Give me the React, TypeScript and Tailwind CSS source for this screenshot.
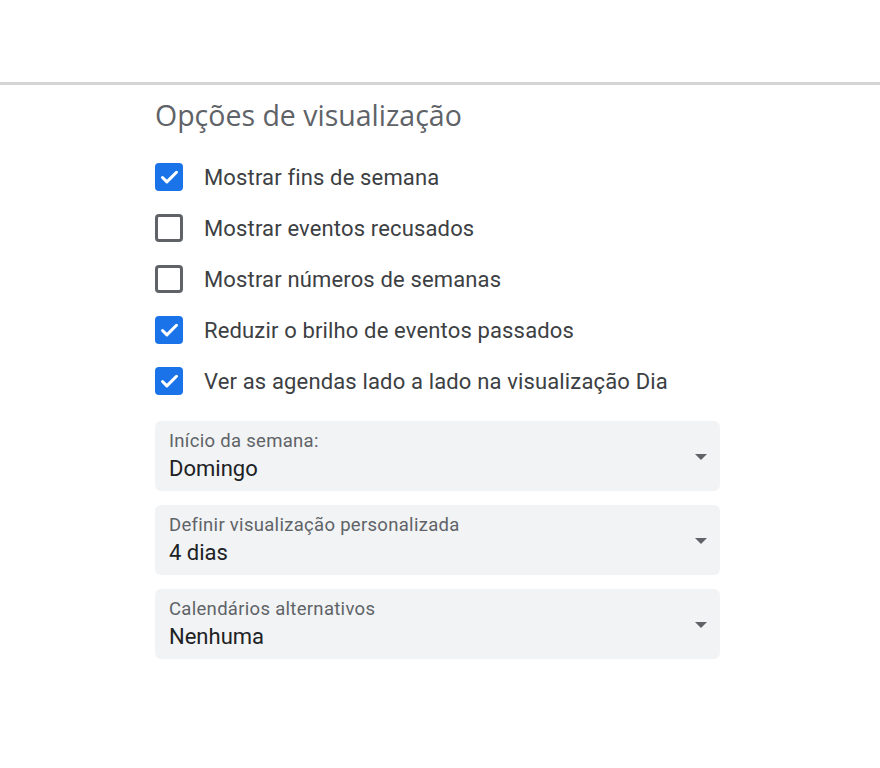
import { Check } from "lucide-react"

const options = [
  { label: "Mostrar fins de semana", checked: true },
  { label: "Mostrar eventos recusados", checked: false },
  { label: "Mostrar números de semanas", checked: false },
  { label: "Reduzir o brilho de eventos passados", checked: true },
  { label: "Ver as agendas lado a lado na visualização Dia", checked: true },
]

const selects = [
  { label: "Início da semana:", value: "Domingo" },
  { label: "Definir visualização personalizada", value: "4 dias" },
  { label: "Calendários alternativos", value: "Nenhuma" },
]

function Checkbox({ checked }: { checked: boolean }) {
  if (checked) {
    return (
      <span className="flex h-[28px] w-[28px] shrink-0 items-center justify-center rounded-[4px] bg-[#1a73e8]">
        <Check className="h-[21px] w-[21px] text-white" strokeWidth={3.5} />
      </span>
    )
  }
  return <span className="h-[28px] w-[28px] shrink-0 rounded-[4px] border-[3px] border-[#5f6368]" />
}

export default function App() {
  return (
    <div className="min-h-[768px] bg-white font-['Roboto',sans-serif]">
      <div className="h-[82px]" />
      <div className="h-[3px] bg-[#d4d4d4]" />
      <main className="pl-[155px] pt-[13px]">
        <h2 className="font-['Open_Sans',sans-serif] text-[28.5px] leading-[34px] text-[#5f6368]">
          Opções de visualização
        </h2>

        <div className="mt-[31px] flex flex-col gap-[23px]">
          {options.map((o) => (
            <label key={o.label} className="flex h-[28px] items-center gap-[21px]">
              <Checkbox checked={o.checked} />
              <span className="text-[22px] tracking-[0.15px] text-[#3c4043]">{o.label}</span>
            </label>
          ))}
        </div>

        <div className="mt-[26px] flex w-[565px] flex-col gap-[14px]">
          {selects.map((s) => (
            <div key={s.label} className="flex h-[70px] items-center rounded-[6px] bg-[#f1f3f4] pl-[14px] pr-[13px]">
              <div className="flex-1">
                <div className="text-[18.5px] leading-[22px] tracking-[0.3px] text-[#5f6368]">{s.label}</div>
                <div className="mt-[4px] text-[22px] leading-[26px] text-[#202124]">{s.value}</div>
              </div>
              <svg width="12" height="6" viewBox="0 0 12 6" className="mt-[2px]">
                <path d="M0 0h12L6 6z" fill="#5f6368" />
              </svg>
            </div>
          ))}
        </div>
      </main>
    </div>
  )
}
